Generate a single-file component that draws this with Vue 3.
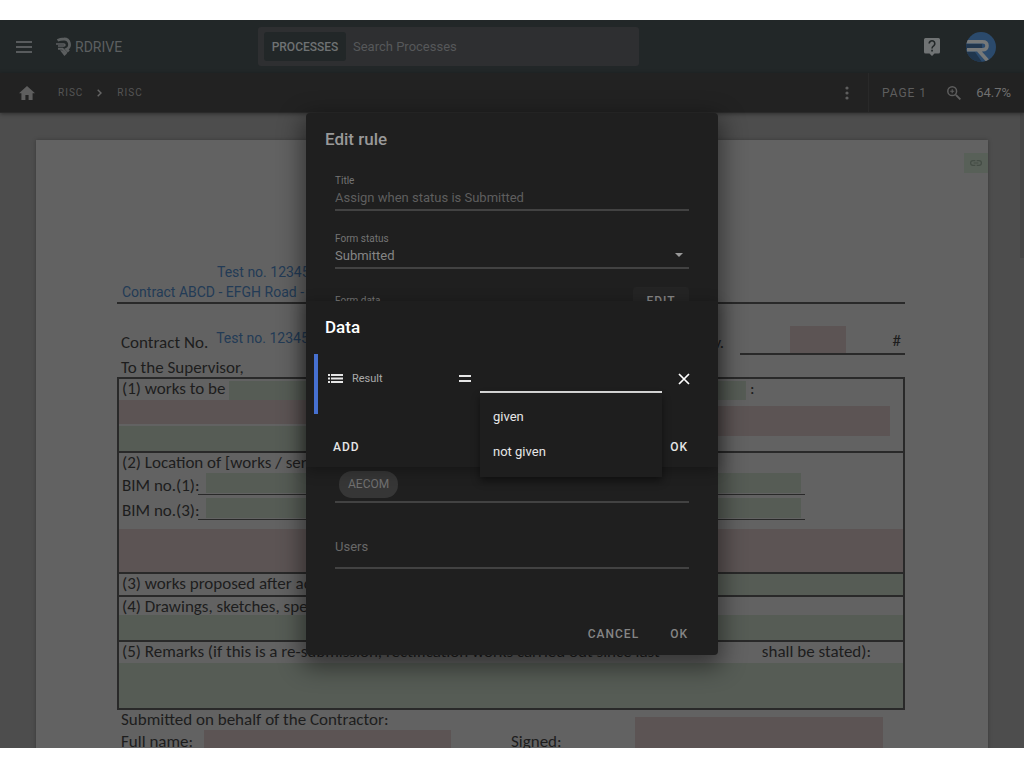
<script setup>
import { ref } from 'vue'

const title = ref('Assign when status is Submitted')
const status = ref('Submitted')
const query = ref('')
const result = ref('')
const users = ref('')
const groups = ['AECOM']
const options = ['given', 'not given']
</script>

<template>
  <div class="screen">
    <div class="shell">
      <header class="topbar">
        <button class="icon-btn menu-btn" aria-label="Menu">
          <svg width="16" height="12" viewBox="0 0 16 12"><path d="M0 1h16M0 6h16M0 11h16" stroke="currentColor" stroke-width="1.5" /></svg>
        </button>
        <a class="brand" href="#">
          <svg width="18" height="20" viewBox="0 0 18 20" fill="none" stroke="currentColor">
            <path d="M1.500 3.400Q4 2 8 2A5.400 5.400 0 0 1 10.600 12.200L12.800 14.400" stroke-width="2.800" />
            <path d="M0 6.900h7.800q1.200 0 1.200 1t-1.200 1H2" stroke-width="1.500" />
            <path d="M2 11.700H6.500L10.800 16" stroke-width="2" />
            <path d="M4 13.200h2.400l4.600 3.400L8.400 19z" fill="currentColor" stroke="none" />
          </svg>
          <span>RDRIVE</span>
        </a>
        <div class="search">
          <button class="scope">PROCESSES</button>
          <input v-model="query" type="search" placeholder="Search Processes" aria-label="Search Processes" />
        </div>
        <button class="icon-btn help" aria-label="Help">
          <svg width="16" height="18" viewBox="0 0 16 18">
            <path d="M1.500 0h13Q16 0 16 1.500v12.500q0 1.500-1.500 1.500H10.500L8 18l-2.500-2.500H1.500Q0 15.500 0 14V1.500Q0 0 1.500 0z" fill="currentColor" />
            <path d="M5.200 5.600a2.800 2.800 0 1 1 4.700 2Q8 9 8 10.400" fill="none" stroke="#222728" stroke-width="1.600" />
            <path d="M7.200 11.800h1.700v1.700H7.200z" fill="#222728" />
          </svg>
        </button>
        <button class="icon-btn avatar" aria-label="Account">
          <svg width="30" height="30" viewBox="0 0 30 30">
            <defs><clipPath id="disc"><circle cx="15" cy="15" r="15" /></clipPath></defs>
            <g clip-path="url(#disc)">
              <path d="M0 0h30v30H0z" fill="#2b4a6c" />
              <path d="M0 12h16v5H0zM0 20h9l7 10H0z" fill="#20364e" />
              <path d="M0 9.700h16.500q4.500 0 4.500 4t-4.500 4H1M12.500 18.500l9 10" fill="none" stroke="#777979" stroke-width="3.600" />
            </g>
          </svg>
        </button>
      </header>

      <nav class="toolbar" aria-label="Document">
        <a class="home" href="#" aria-label="Home">
          <svg width="16" height="14" viewBox="0 0 16 14"><path d="M8 0l8 7.200h-2.400V14H9.600V9H6.400v5H2.400V7.200H0z" fill="currentColor" /></svg>
        </a>
        <a class="crumb" href="#">RISC</a>
        <svg class="chevron" width="5" height="8" viewBox="0 0 5 8"><path d="M.7.700L4 4 .7 7.300" fill="none" stroke="currentColor" stroke-width="1.400" /></svg>
        <a class="crumb" href="#">RISC</a>
        <button class="icon-btn more" aria-label="More">
          <svg width="4" height="14" viewBox="0 0 4 14" fill="currentColor"><circle cx="2" cy="2" r="1.600" /><circle cx="2" cy="7" r="1.600" /><circle cx="2" cy="12" r="1.600" /></svg>
        </button>
        <div class="pager">
          <span class="page-no">PAGE 1</span>
          <button class="icon-btn" aria-label="Zoom in">
            <svg width="14" height="14" viewBox="0 0 14 14" fill="none" stroke="currentColor">
              <circle cx="5.200" cy="5.200" r="4.400" stroke-width="1.500" /><path d="M8.800 8.800l4.600 4.600" stroke-width="1.900" /><path d="M5.200 3.200v4M3.200 5.200h4" stroke-width="1.100" />
            </svg>
          </button>
          <span class="zoom">64.7%</span>
        </div>
      </nav>

      <main class="desk">
        <article class="sheet">
          <button class="link-chip" aria-label="Link">
            <svg width="12" height="6" viewBox="0 0 12 6" fill="none" stroke="currentColor" stroke-width="1.200"><path d="M5.300.600H3a2.400 2.400 0 0 0 0 4.800h2.300M6.700.600H9a2.400 2.400 0 0 1 0 4.800H6.700M3.700 3h4.600" /></svg>
          </button>
          <div class="letterhead">
            <p class="entry ref">Test no. 12345</p>
            <p class="entry">Contract ABCD - EFGH Road - Stage 1</p>
          </div>
          <div class="contract">
            <span>Contract No.</span>
            <span class="entry">Test no. 12345</span>
            <div class="survey"><span>Rev.</span></div>
            <div class="number"><i class="pink"></i><span>#</span></div>
          </div>
          <p class="to">To the Supervisor,</p>

          <div class="grid">
            <section class="works">
              <div class="line"><span>(1) works to be</span><i class="green"></i><b>:</b></div>
              <div class="split">
                <div class="half"><i class="pink"></i><i class="green"></i></div>
                <i class="pink wide"></i>
              </div>
            </section>
            <section class="location">
              <p>(2) Location of [works / services]:</p>
              <div class="bim"><span>BIM no.(1):</span><div class="blank"><i class="green"></i></div></div>
              <div class="bim"><span>BIM no.(3):</span><div class="blank"><i class="green"></i></div></div>
              <i class="pink block"></i>
            </section>
            <section class="proposed"><span>(3) works proposed after acceptance</span><i class="green"></i></section>
            <section class="drawings"><p>(4) Drawings, sketches, specifications</p><i class="green"></i></section>
            <section class="remarks">
              <p><span>(5) Remarks (if this is a re-submission, rectification works carried out since last</span><span>shall be stated):</span></p>
              <i class="green"></i>
            </section>
          </div>

          <p class="behalf">Submitted on behalf of the Contractor:</p>
          <div class="sign">
            <span>Full name:</span><i class="pink name"></i>
            <span class="signed">Signed:</span><i class="pink signature"></i>
          </div>
        </article>
        <div class="thumb"></div>
      </main>

      <div class="layer">
        <form class="dialog rule" role="dialog" aria-labelledby="rule-title" @submit.prevent>
          <h2 id="rule-title">Edit rule</h2>
          <div class="fields">
            <div class="field">
              <label for="title">Title</label>
              <input id="title" v-model="title" class="muted" type="text" />
            </div>
            <div class="field">
              <label for="status">Form status</label>
              <select id="status" v-model="status"><option>Submitted</option><option>Draft</option></select>
              <svg class="caret" width="8" height="4" viewBox="0 0 8 4"><path d="M0 0h8L4 4z" fill="currentColor" /></svg>
            </div>
            <div class="form-data"><span>Form data</span><button type="button">EDIT</button></div>
            <div class="chips"><span v-for="g in groups" :key="g">{{ g }}</span></div>
            <input v-model="users" class="users" type="text" placeholder="Users" aria-label="Users" />
          </div>
          <div class="actions"><button type="button">CANCEL</button><button type="submit">OK</button></div>
        </form>
      </div>

      <div class="layer">
        <form class="dialog data" role="dialog" aria-labelledby="data-title" @submit.prevent>
          <h2 id="data-title">Data</h2>
          <div class="condition">
            <svg class="list" width="15" height="9" viewBox="0 0 15 9"><path d="M0 1h2M3 1h12M0 4.500h2M3 4.500h12M0 8h2M3 8h12" stroke="currentColor" stroke-width="1.900" /></svg>
            <label for="result">Result</label>
            <svg class="equals" width="12" height="7" viewBox="0 0 12 7"><path d="M0 1h12M0 6h12" stroke="currentColor" stroke-width="2" /></svg>
            <div class="combo">
              <input id="result" v-model="result" type="text" autocomplete="off" />
              <div class="options" role="listbox">
                <button v-for="o in options" :key="o" type="button" role="option" @click="result = o">{{ o }}</button>
              </div>
            </div>
            <button class="icon-btn remove" type="button" aria-label="Remove">
              <svg width="12" height="12" viewBox="0 0 12 12"><path d="M1 1l10 10M11 1L1 11" stroke="currentColor" stroke-width="1.700" /></svg>
            </button>
          </div>
          <div class="actions spread"><button type="button">ADD</button><button type="submit">OK</button></div>
        </form>
      </div>
    </div>
  </div>
</template>

<style>
body { background: #fff; }
</style>

<style scoped>
* { box-sizing: border-box; }
p, h2 { margin: 0; }
button, input, select { font: inherit; color: inherit; border: 0; padding: 0; background: none; outline: 0; min-width: 0; }
button { cursor: pointer; }
a { color: inherit; text-decoration: none; }
svg { display: block; flex: none; }

.screen { height: 100vh; padding: 20px 0; font-family: Roboto, "Liberation Sans", sans-serif; font-size: 13px; }
.shell { position: relative; height: 100%; display: flex; flex-direction: column; overflow: hidden; }
.icon-btn { display: flex; align-items: center; justify-content: center; flex: none; }

.topbar { height: 53px; flex: none; display: flex; align-items: center; padding: 0 28px 0 16px; background: #222728; color: #6b6e6f; }
.brand { display: flex; align-items: center; gap: 1px; margin-left: 24px; width: 202px; font-size: 14px; line-height: 20px; color: #5c5f60; }
.search { flex: 0 1 381px; height: 39px; display: flex; align-items: center; gap: 7px; padding: 0 6px; border-radius: 3px; background: #2e2f31; }
.scope { width: 82px; height: 29px; flex: none; border-radius: 3px; background: #222728; color: #6f7273; font-size: 12px; font-weight: 500; }
.search input { flex: 1; font-size: 13px; }
.search input::placeholder { color: #56585a; opacity: 1; }
.help { margin-left: auto; color: #707374; }
.avatar { margin-left: 26px; }

.toolbar { height: 40px; flex: none; display: flex; align-items: center; padding-left: 19px; background: #222; border-bottom: 1px solid #2a2a2a; color: #5e5e5e; z-index: 1; box-shadow: 0 1px 4px #0006; }
.home { margin-right: 23px; }
.crumb { font-size: 10px; letter-spacing: 1px; color: #555; }
.chevron { margin: 0 15px 0 14px; color: #666; }
.more { margin-left: auto; margin-right: 19px; }
.pager { align-self: stretch; display: flex; align-items: center; padding: 0 13px; border-left: 1px solid #292929; }
.page-no { margin-right: 20px; font-size: 12px; letter-spacing: 1px; }
.zoom { margin-left: 15px; font-size: 13px; color: #707070; }

.desk { position: relative; flex: 1; min-height: 0; overflow: hidden; background: #4d4d4d; padding: 27px 36px 0; }
.thumb { position: absolute; top: 0; right: 0; width: 4px; height: 145px; background: #464646; }
.sheet { position: relative; height: 700px; padding: 122px 83px 0 81px; background: #626262; box-shadow: 0 0 4px #0004; color: #1d1d1d; font-family: Carlito, Lato, sans-serif; font-size: 17px; line-height: 20px; white-space: nowrap; }
.link-chip { position: absolute; top: 13px; right: 0; width: 24px; height: 20px; display: flex; align-items: center; justify-content: center; background: #586058; color: #444c45; }
.pink { display: block; background: #5c5454; }
.green { display: block; background: #565c55; }
.entry { font-family: Roboto, sans-serif; font-size: 14px; color: #233b56; }
.letterhead { height: 42px; padding-left: 5px; border-bottom: 2px solid #292929; }
.ref { padding-left: 95px; }
.contract { height: 51px; display: flex; padding: 22px 0 0 4px; align-items: flex-end; line-height: 24px; }
.contract .entry { margin-left: 8px; padding-bottom: 5px; }
.survey { margin-left: auto; padding-right: 16px; }
.number { width: 165px; height: 29px; flex: none; display: flex; align-items: flex-end; justify-content: space-between; padding: 0 4px 0 50px; border-bottom: 2px solid #292929; }
.number i { width: 56px; height: 27px; }
.to { padding-left: 4px; height: 22px; line-height: 26px; }

.grid { border: 2px solid #292929; }
.grid section + section { border-top: 2px solid #292929; }
.works { height: 72px; }
.line { display: flex; height: 21px; }
.line span { width: 110px; padding-left: 3px; }
.line i { flex: 0 1 517px; margin-top: 2px; }
.line b { font-weight: 400; margin-left: 4px; }
.split { display: flex; }
.half { flex: 1; }
.half .pink { height: 24px; margin-bottom: 2px; }
.half .green { height: 25px; }
.split .wide { flex: 1; height: 30px; margin: 6px 13px 0 0; }
.location { height: 121px; }
.location p { padding-left: 3px; height: 20px; }
.bim { display: flex; padding-left: 3px; height: 25px; }
.bim span { width: 76px; line-height: 26px; }
.blank { flex: 0 1 607px; height: 22px; padding: 0 4px 0 8px; border-bottom: 1px solid #292929; }
.blank i { height: 20px; }
.location .block { height: 43px; margin-top: 6px; }
.proposed { height: 23px; display: flex; padding-left: 3px; }
.proposed i { flex: 1; margin-left: 20px; }
.drawings { height: 45px; }
.drawings p { padding-left: 3px; height: 18px; }
.drawings i { height: 25px; }
.remarks { height: 68px; }
.remarks p { display: flex; justify-content: space-between; height: 21px; padding: 0 32px 0 3px; }
.remarks i { height: 45px; }
.behalf { padding-left: 4px; }
.sign { display: flex; padding-left: 4px; line-height: 24px; }
.sign span { width: 83px; }
.sign i { height: 50px; }
.name { width: 247px; }
.sign .signed { width: 124px; margin-left: 60px; }
.sign .signature { width: 248px; margin-top: -13px; }

.layer { position: absolute; inset: 0; display: flex; align-items: center; justify-content: center; z-index: 2; }
.dialog { width: 412px; max-width: 90%; border-radius: 4px; box-shadow: 0 8px 24px 4px #0007; }
.dialog h2 { font-size: 17px; font-weight: 500; line-height: 24px; padding: 14px 19px 0; }
.rule { background: #1f1f1f; color: #858585; }
.rule h2 { color: #999; }
.fields { padding: 20px 29px 0; display: flex; flex-direction: column; }
.field { position: relative; height: 40px; margin-bottom: 18px; border-bottom: 2px solid #424242; display: flex; flex-direction: column; }
.field label, .form-data span { font-size: 10px; line-height: 16px; color: #747474; }
.field input, .field select { width: 100%; height: 16px; appearance: none; }
.field label { padding-top: 2px; }
.muted { color: #5e5e5e; }
.caret { position: absolute; right: 6px; bottom: 10px; color: #999; }
.form-data { display: flex; justify-content: space-between; align-items: center; }
.form-data button { width: 56px; height: 28px; border-radius: 3px; background: #242424; font-size: 12px; font-weight: 500; letter-spacing: 1px; }
.chips { display: flex; padding: 0 4px 3px; margin-top: 156px; border-bottom: 2px solid #424242; }
.chips span { padding: 0 9px; border-radius: 13px; background: #363636; color: #707070; font-size: 12px; line-height: 27px; }
.users { width: 100%; height: 44px; margin-top: 22px; border-bottom: 2px solid #424242; }
.users::placeholder { color: #686868; opacity: 1; }
.actions { display: flex; justify-content: flex-end; gap: 31px; padding: 0 30px; font-size: 12px; font-weight: 500; line-height: 20px; }
.actions button { letter-spacing: 1px; }
.rule .actions { padding-top: 55px; padding-bottom: 11px; }

.data { background: #1e1e1e; color: #e6e6e6; box-shadow: 0 3px 14px #0005; border-radius: 0; }
.data h2 { color: #fff; padding-bottom: 15px; }
.condition { display: flex; align-items: center; height: 60px; margin-left: 8px; padding: 0 28px 11px 10px; border-left: 4px solid #4670d0; }
.condition label { margin-left: 9px; width: 107px; font-size: 11px; color: #aaa; }
.combo { position: relative; flex: 1; margin-left: 9px; align-self: flex-start; }
.combo input { display: block; width: 100%; height: 39px; border-bottom: 2px solid #ddd; }
.options { position: absolute; top: 39px; left: 0; right: 0; padding: 6px 0 8px; background: #1e1e1e; box-shadow: 0 4px 8px #0007; }
.options button { display: block; width: 100%; height: 35px; padding: 0 13px; text-align: left; color: #e6e6e6; }
.remove { margin-left: 16px; color: #fff; }
.spread { justify-content: space-between; padding: 23px 30px 10px 27px; }
</style>
